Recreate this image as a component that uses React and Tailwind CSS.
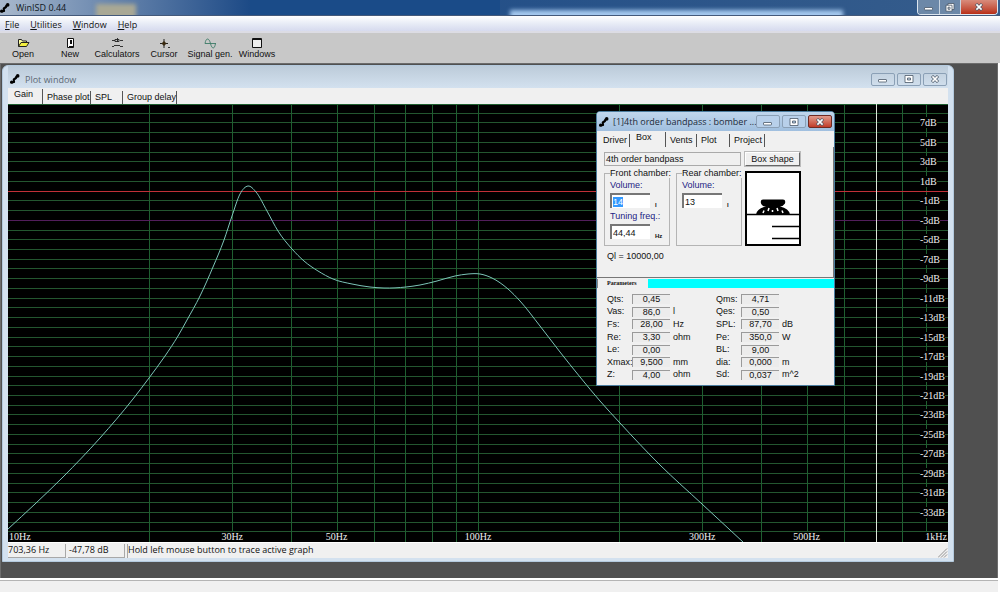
import React, { useEffect, useRef, useState } from "react";

const START_HZ = 10;
const TOP_DB = 9;
const BOTTOM_DB = -36;
const CURSOR_HZ = 703.36;

const gridFreqs = [20, 30, 40, 50, 60, 70, 80, 90, 100, 200, 300, 400, 500, 600, 800, 900];
const freqLabels = [
  { hz: 30, text: "30Hz" },
  { hz: 50, text: "50Hz" },
  { hz: 100, text: "100Hz" },
  { hz: 300, text: "300Hz" },
  { hz: 500, text: "500Hz" },
];
const dbLabels = [7, 5, 3, 1, -1, -3, -5, -7, -9, -11, -13, -15, -17, -19, -21, -23, -25, -27, -29, -31, -33];
const dbLines = Array.from({ length: 44 }, (_, i) => 8 - i).filter((db) => db !== 0 && db !== -3);

// Response curve, in chart units (940 x 438)
const curve = [
  [0, 425], [27, 400], [55, 373], [92, 334], [125, 295], [141, 274],
  [157, 252], [170, 232], [179, 216], [192, 192], [205, 163], [216, 136], [224, 112],
  [232, 90], [240, 82], [248, 88], [259, 107], [270, 127], [284, 145],
  [296, 157], [310, 167], [325, 175], [344, 180], [362, 183], [376, 184], [398, 183],
  [412, 181], [429, 177], [447, 172], [460, 170], [472, 170], [484, 174], [500, 185],
  [512, 197], [532, 222], [552, 248], [572, 273], [592, 297], [612, 319], [652, 361],
  [694, 400], [735, 438],
];

const freqPos = (hz) => Math.log10(hz / START_HZ) / 2;
const dbPos = (db) => (TOP_DB - db) / (TOP_DB - BOTTOM_DB);
const dbY = (db) => Math.round(dbPos(db) * 438) - 0.5;

// Cubic segments with slopes weighted by the distance between points
const smooth = (pts) => {
  const slopes = pts.map((p, i) => {
    const prev = pts[i - 1];
    const next = pts[i + 1];
    const before = prev && (p[1] - prev[1]) / (p[0] - prev[0]);
    const after = next && (next[1] - p[1]) / (next[0] - p[0]);
    if (!prev) return after;
    if (!next) return before;
    const h0 = p[0] - prev[0];
    const h1 = next[0] - p[0];
    return (h1 * before + h0 * after) / (h0 + h1);
  });
  let d = `M${pts[0][0]} ${pts[0][1]}`;
  for (let i = 0; i < pts.length - 1; i++) {
    const [x1, y1] = pts[i];
    const [x2, y2] = pts[i + 1];
    const h = (x2 - x1) / 3;
    d += ` C${x1 + h} ${y1 + slopes[i] * h} ${x2 - h} ${y2 - slopes[i + 1] * h} ${x2} ${y2}`;
  }
  return d;
};

const AppIcon = () => (
  <svg width="10" height="10" viewBox="0 0 10 10" className="shrink-0" aria-hidden="true">
    <path d="M1.5 8.5 L4 8 L3.8 5.5 L6 4 L6.5 2" fill="none" stroke="#000" strokeWidth="2.2" strokeLinejoin="round" />
    <circle cx="7.7" cy="1.9" r="1.8" />
    <circle cx="1.6" cy="8.2" r="1.6" />
  </svg>
);

const MinGlyph = () => (
  <svg width="10" height="8" viewBox="0 0 10 8" aria-hidden="true">
    <rect x="0.5" y="4.5" width="8" height="2.5" rx="0.5" fill="#fff" stroke="#4a5868" strokeWidth="0.8" />
  </svg>
);
const MaxGlyph = () => (
  <svg width="10" height="8" viewBox="0 0 10 8" aria-hidden="true">
    <path d="M1 0.5h8v7h-8z M3.5 3v2h3v-2z" fill="#fff" fillRule="evenodd" stroke="#4a5868" strokeWidth="0.8" />
  </svg>
);
const RestoreGlyph = () => (
  <svg width="10" height="9" viewBox="0 0 10 9" aria-hidden="true">
    <path d="M3 0.5h6v6h-6z" fill="#fff" stroke="#4a5868" strokeWidth="0.8" />
    <path d="M1 2.2h6v6h-6z M3 4.2v2h2v-2z" fill="#fff" fillRule="evenodd" stroke="#4a5868" strokeWidth="0.8" />
  </svg>
);
const CloseGlyph = () => (
  <svg width="10" height="8" viewBox="0 0 10 8" aria-hidden="true">
    <path d="M2 1l6 6M8 1l-6 6" stroke="#4a5868" strokeWidth="3" />
    <path d="M2.4 1.4l5.2 5.2M7.6 1.4l-5.2 5.2" stroke="#fff" strokeWidth="1.6" />
  </svg>
);

const tools = [
  {
    name: "Open",
    width: "w-[46px]",
    icon: (
      <>
        <path d="M1.5 9.5v-7h3l1 1.5h4v2" fill="#ffffa0" stroke="#222" />
        <path d="M1.5 9.5l2.5-4h8l-2.5 4z" fill="#f4f040" stroke="#222" />
      </>
    ),
  },
  {
    name: "New",
    width: "w-[48px]",
    icon: (
      <>
        <path d="M3.5 1.5h6v9h-6z" fill="#fff" stroke="#111" />
        <path d="M6 3h2v4h-2zM5 9h4v1h-4z" fill="#111" />
      </>
    ),
  },
  {
    name: "Calculators",
    width: "w-[46px]",
    icon: (
      <path d="M1 3.5h3M9 3.5h3M4 2.5h4v2h-4zM1 9.5h2M3 8.5h6M9 9.5h3M6.5 1v4" fill="none" stroke="#222" strokeWidth="0.9" />
    ),
  },
  {
    name: "Cursor",
    width: "w-[48px]",
    icon: (
      <>
        <path d="M2 6.5h8M6 2v9" fill="none" stroke="#222" />
        <path d="M6 4l2.500 2.500l-2.500 2.500l-2.500-2.500z" fill="#3a2a10" />
        <path d="M10 10.5h2" stroke="#333" />
      </>
    ),
  },
  {
    name: "Signal gen.",
    width: "w-[44px]",
    icon: (
      <path d="M1 6.5h11M1 6.5c1-6 4-6 5.5 0s4 6 5 0" fill="none" stroke="#3c7a66" strokeWidth="0.9" />
    ),
  },
  {
    name: "Windows",
    width: "w-[50px]",
    icon: (
      <>
        <path d="M1.5 1.5h9v9h-9z" fill="#eee" stroke="#111" />
        <path d="M1 2.5h10" stroke="#111" />
      </>
    ),
  },
];

const menus = ["File", "Utilities", "Window", "Help"];

const Tab = ({ label, active, onClick, width }) => (
  <button
    type="button"
    role="tab"
    aria-selected={active}
    onClick={onClick}
    className={`${width} shrink-0 border-r border-[#555] text-left whitespace-nowrap ${
      active ? "h-[15px] pb-1 pl-[6px]" : "h-[13px] pl-1"
    }`}
  >
    {label}
  </button>
);

const Chart = () => (
  <div className="relative min-h-0 flex-1 overflow-hidden bg-black font-['Liberation_Serif',serif] text-[10px] leading-[10px] text-[#f0f0f0]">
    <svg className="absolute inset-0 h-full w-full" viewBox="0 0 940 438" preserveAspectRatio="none" aria-label="Gain">
      {dbLines.map((db) => (
        <path key={db} d={`M0 ${dbY(db)}H940`} stroke="#23562f" vectorEffect="non-scaling-stroke" />
      ))}
      {gridFreqs.map((hz) => (
        <path
          key={hz}
          d={`M${Math.round(freqPos(hz) * 940) + 0.5} 0V438`}
          stroke="#1f5f30"
          vectorEffect="non-scaling-stroke"
        />
      ))}
      <path d="M0 0.5H940" stroke="#1f5f30" />
      <path d={`M0 ${dbY(0)}H940`} stroke="#c03038" vectorEffect="non-scaling-stroke" />
      <path d={`M0 ${dbY(-3)}H940`} stroke="#521e5c" vectorEffect="non-scaling-stroke" />
      <path
        d={`M${Math.round(freqPos(CURSOR_HZ) * 940) + 0.5} 0V438`}
        stroke="#dce4d8"
        vectorEffect="non-scaling-stroke"
      />
      <path d={smooth(curve)} fill="none" stroke="#7cc4b8" strokeWidth="1" vectorEffect="non-scaling-stroke" />
    </svg>
    {dbLabels.map((db) => (
      <span
        key={db}
        className="absolute right-0 w-7 -translate-y-1/2"
        style={{ top: `${dbPos(db) * 100}%` }}
      >
        <span className="bg-black">{db}dB</span>
      </span>
    ))}
    <span className="absolute bottom-0 left-px bg-black">10Hz</span>
    {freqLabels.map((f) => (
      <span
        key={f.hz}
        className="absolute bottom-0 -translate-x-1/2 bg-black"
        style={{ left: `${freqPos(f.hz) * 100}%` }}
      >
        {f.text}
      </span>
    ))}
    <span className="absolute right-px bottom-0 bg-black">1kHz</span>
  </div>
);

const plotTabs = [
  { label: "Gain", width: "w-[35px]" },
  { label: "Phase plot", width: "w-[48px]" },
  { label: "SPL", width: "w-[32px]" },
  { label: "Group delay", width: "w-[54px]" },
];

const frameButton = "flex h-[13px] w-6 items-center justify-center rounded-[2px] border border-[#8ba0b6]";

const PlotWindow = () => {
  const [tab, setTab] = useState("Gain");

  return (
    <section className="absolute top-px right-[43px] bottom-4 left-px flex flex-col rounded-t-md border border-[#b4cade] bg-[#d3e1ef] px-[5px] pb-[3px]">
      <header className="flex h-[22px] shrink-0 items-center bg-linear-to-b from-[#bccbd9] to-[#d3e1ef] pl-[2px] pt-1">
        <AppIcon />
        <h2 className="ml-[5px] flex-1 font-['Open_Sans',sans-serif] text-[9px] text-[#5c6874]">Plot window</h2>
        <div className="flex gap-[2px] pr-px">
          <button type="button" aria-label="Minimize" className={frameButton}><MinGlyph /></button>
          <button type="button" aria-label="Maximize" className={frameButton}><MaxGlyph /></button>
          <button type="button" aria-label="Close" className={frameButton}><CloseGlyph /></button>
        </div>
      </header>
      <div role="tablist" className="flex h-4 shrink-0 items-end bg-[#f0f0f0]">
        {plotTabs.map((t) => (
          <Tab key={t.label} {...t} active={tab === t.label} onClick={() => setTab(t.label)} />
        ))}
      </div>
      <Chart />
      <footer className="flex h-4 shrink-0 items-center gap-[2px] border-t border-white bg-[#f0f0f0] font-['Open_Sans',sans-serif] text-[9px] leading-3">
        <span className="h-[14px] w-[58px] border-r border-b border-[#a8a8a8]">703,36 Hz</span>
        <span className="h-[14px] w-[57px] border-r border-b border-[#a8a8a8] pl-px">-47,78 dB</span>
        <span className="h-[14px] flex-1 border-l border-[#a8a8a8]">Hold left mouse button to trace active graph</span>
        <svg width="10" height="10" viewBox="0 0 10 10" className="self-end" aria-hidden="true">
          <path d="M0 9.5L9 0.5M3 9.5l6-6M6 9.5l3-3" stroke="#888" strokeWidth="0.9" />
        </svg>
      </footer>
    </section>
  );
};

const boxTabs = [
  { label: "Driver", width: "w-[31px]" },
  { label: "Box", width: "w-[36px]" },
  { label: "Vents", width: "w-[31px]" },
  { label: "Plot", width: "w-[33px]" },
  { label: "Project", width: "w-[35px]" },
];

const leftParams = [
  ["Qts", "0,45", ""],
  ["Vas", "86,0", "l"],
  ["Fs", "28,00", "Hz"],
  ["Re", "3,30", "ohm"],
  ["Le", "0,00", ""],
  ["Xmax", "9,500", "mm"],
  ["Z", "4,00", "ohm"],
];
const rightParams = [
  ["Qms", "4,71", ""],
  ["Qes", "0,50", ""],
  ["SPL", "87,70", "dB"],
  ["Pe", "350,0", "W"],
  ["BL", "9,00", ""],
  ["dia", "0,000", "m"],
  ["Sd", "0,037", "m^2"],
];

const ParamColumn = ({ rows }) => (
  <div className="flex h-[88px] w-[109px] flex-col">
    {rows.map(([name, value, unit]) => (
      <div key={name} className="flex flex-1 items-center">
        <label htmlFor={name} className="w-[25px]">{name}:</label>
        <input
          id={name}
          readOnly
          value={value}
          className="h-[10px] w-[38px] border-t border-l border-[#9a9a9a] bg-[#ececec] text-center outline-none"
        />
        <span className="ml-[3px]">{unit}</span>
      </div>
    ))}
  </div>
);

const BoxField = ({ id, label, unit, value, onChange, inputRef }) => (
  <div>
    <label htmlFor={id} className="block text-[#1c1c84]">{label}</label>
    <div className="mt-[2px] flex items-end gap-[5px]">
      <input
        id={id}
        ref={inputRef}
        value={value}
        onChange={onChange}
        className="h-[15px] w-10 border-t-2 border-l-2 border-[#777] bg-white pl-px outline-none selection:bg-[#3399ff] selection:text-white"
      />
      <span className="text-[6px] leading-[6px] font-bold">{unit}</span>
    </div>
  </div>
);

const BoxDialog = () => {
  const [tab, setTab] = useState("Box");
  const [values, setValues] = useState({ front: "14", tuning: "44,44", rear: "13" });
  const frontRef = useRef(null);

  useEffect(() => {
    frontRef.current.focus();
    frontRef.current.select();
  }, []);

  const handleChange = (e) => {
    const { id, value } = e.target;
    setValues((prev) => ({ ...prev, [id]: value }));
  };

  return (
    <section className="absolute top-[47px] left-[595px] w-[239px] rounded-t-[4px] border border-[#4c7ea0] bg-[#f0f0f0]">
      <header className="flex h-[19px] items-center rounded-t-[3px] bg-linear-to-b from-[#c0d6ec] to-[#a0bfdf] pl-[2px]">
        <AppIcon />
        <h2 className="ml-1 min-w-0 flex-1 font-['Open_Sans',sans-serif] text-[9px] whitespace-nowrap text-[#1c2a3a]">
          [1]4th order bandpass : bomber ...
        </h2>
        <div className="flex gap-[2px] pr-[2px]">
          <button type="button" aria-label="Minimize" className={`${frameButton} bg-[#b8d0ea]`}><MinGlyph /></button>
          <button type="button" aria-label="Maximize" className={`${frameButton} bg-[#b8d0ea]`}><MaxGlyph /></button>
          <button
            type="button"
            aria-label="Close"
            className="flex h-[13px] w-6 items-center justify-center rounded-[2px] border border-[#6e2a22] bg-linear-to-b from-[#e09a8c] to-[#c03a28]"
          >
            <CloseGlyph />
          </button>
        </div>
      </header>

      <div role="tablist" className="flex h-4 items-end pl-[2px]">
        {boxTabs.map((t) => (
          <Tab key={t.label} {...t} active={tab === t.label} onClick={() => setTab(t.label)} />
        ))}
      </div>

      <div className="h-[131px] border-r border-b border-[#777] px-[7px] pt-[5px]">
        <div className="flex gap-1">
          <div className="h-[14px] w-[137px] border border-[#aaa] pl-px leading-3">4th order bandpass</div>
          <button type="button" className="h-[14px] w-[55px] border border-[#fff] border-r-[#666] border-b-[#666] bg-[#f0f0f0] leading-3 shadow-[0_0_0_1px_#bbb]">
            Box shape
          </button>
        </div>
        <div className="mt-[2px] flex">
          <fieldset className="h-[78px] w-[66px] min-w-0 border border-[#b4b4b4] pl-[5px]">
            <legend className="leading-[10px] whitespace-nowrap">Front chamber:</legend>
            <div className="flex flex-col gap-[3px] pt-[2px]">
              <BoxField id="front" label="Volume:" unit="l" value={values.front} onChange={handleChange} inputRef={frontRef} />
              <BoxField id="tuning" label="Tuning freq.:" unit="Hz" value={values.tuning} onChange={handleChange} />
            </div>
          </fieldset>
          <fieldset className="ml-[6px] h-[78px] w-[66px] min-w-0 border border-[#b4b4b4] pl-[5px]">
            <legend className="leading-[10px] whitespace-nowrap">Rear chamber:</legend>
            <div className="pt-[2px]">
              <BoxField id="rear" label="Volume:" unit="l" value={values.rear} onChange={handleChange} />
            </div>
          </fieldset>
          <svg width="56" height="75" viewBox="0 0 56 75" className="mt-[3px] ml-[3px] shrink-0" role="img" aria-label="4th order bandpass">
            <rect x="1" y="1" width="54" height="73" fill="#fff" stroke="#000" strokeWidth="2" />
            <path d="M1 43.5H55M27 55.5H55M27 67.5H55" stroke="#000" strokeWidth="1.6" />
            <path d="M18 28.5h20q3 0 2 4q-2 3-5 3q9 2 10 8h-34q1-6 10-8q-4 0-5-3q-1-4 2-4z" />
            <path d="M18 42l1-2.500M23 40l1-3M27.500 41v-2M33 40l-1-3M38 42l-1-2.500" stroke="#fff" strokeWidth="1.5" />
          </svg>
        </div>
        <p className="mt-[5px] pl-[3px]">Ql = 10000,00</p>
      </div>

      <div className="mt-px flex h-[9px] bg-[#00ffff]">
        <h3 className="w-[51px] border-l border-[#888] bg-[#f0f0f0] pl-[9px] font-['Liberation_Serif',serif] text-[6px] leading-[9px] font-bold">
          Parameters
        </h3>
      </div>
      <div className="flex pt-[5px] pb-1 pl-[10px]">
        <ParamColumn rows={leftParams} />
        <ParamColumn rows={rightParams} />
      </div>
    </section>
  );
};

const mainButton = "flex h-[14px] items-center justify-center";

const App = () => {
  return (
    <main className="flex h-screen flex-col overflow-hidden bg-white font-['Liberation_Sans',sans-serif] text-[9px] leading-[11px] text-[#111]">
      <header className="relative flex h-4 shrink-0 items-center overflow-hidden border-b border-[#44597a] bg-linear-to-r from-[#a8b8cc] via-[#1c4a86] via-25% to-[#365d8c]">
        <div className="absolute inset-y-0 left-1/4 w-1/4 bg-[#1a4b88]" />
        <div className="absolute top-1 left-24 h-4 w-10 bg-[#a9a894] blur-[2px]" />
        <div className="absolute top-[10px] left-[51%] h-3 w-1/3 bg-[#a4c8ee] blur-[2px]" />
        <div className="relative flex items-center gap-[6px]">
          <AppIcon />
          <h1 className="font-['Open_Sans',sans-serif] text-[9px] text-[#101820]">WinISD 0.44</h1>
        </div>
        <div className="relative mr-[2px] ml-auto flex self-start overflow-hidden rounded-b-[4px] border border-t-0 border-[#dce6f0]">
          <button type="button" aria-label="Minimize" className={`${mainButton} w-[22px] border-r border-[#c8d4e0] bg-[#6c88a8]`}><MinGlyph /></button>
          <button type="button" aria-label="Restore" className={`${mainButton} w-[21px] border-r border-[#c8d4e0] bg-[#6c88a8]`}><RestoreGlyph /></button>
          <button type="button" aria-label="Close" className={`${mainButton} w-[36px] bg-linear-to-b from-[#d88c7c] to-[#b82c14]`}><CloseGlyph /></button>
        </div>
      </header>

      <nav className="flex h-[15px] shrink-0 items-center gap-[11px] bg-linear-to-b from-white via-[#e8ecf6] to-[#d6daee] pl-[5px] pt-px font-['Open_Sans',sans-serif] text-[9px]">
        {menus.map((m) => (
          <button key={m} type="button">
            <span className="underline">{m[0]}</span>
            {m.slice(1)}
          </button>
        ))}
      </nav>

      <div className="flex h-8 shrink-0 items-center border-t-2 border-[#dcdce4] bg-[#c8c8c8]">
        {tools.map((t) => (
          <button key={t.name} type="button" className={`${t.width} flex flex-col items-center whitespace-nowrap`}>
            <svg width="13" height="12" viewBox="0 0 13 12" aria-hidden="true">{t.icon}</svg>
            {t.name}
          </button>
        ))}
      </div>

      <div className="relative mr-[2px] min-h-0 flex-1 border-t border-r border-l border-[#6c6c6c] bg-[#505050]">
        <PlotWindow />
        <BoxDialog />
      </div>

      <footer className="mt-[2px] mr-[2px] mb-px h-3 shrink-0 border-t border-[#b4b4b4] bg-[#f0f0f0]" />
    </main>
  );
};

export default App;
